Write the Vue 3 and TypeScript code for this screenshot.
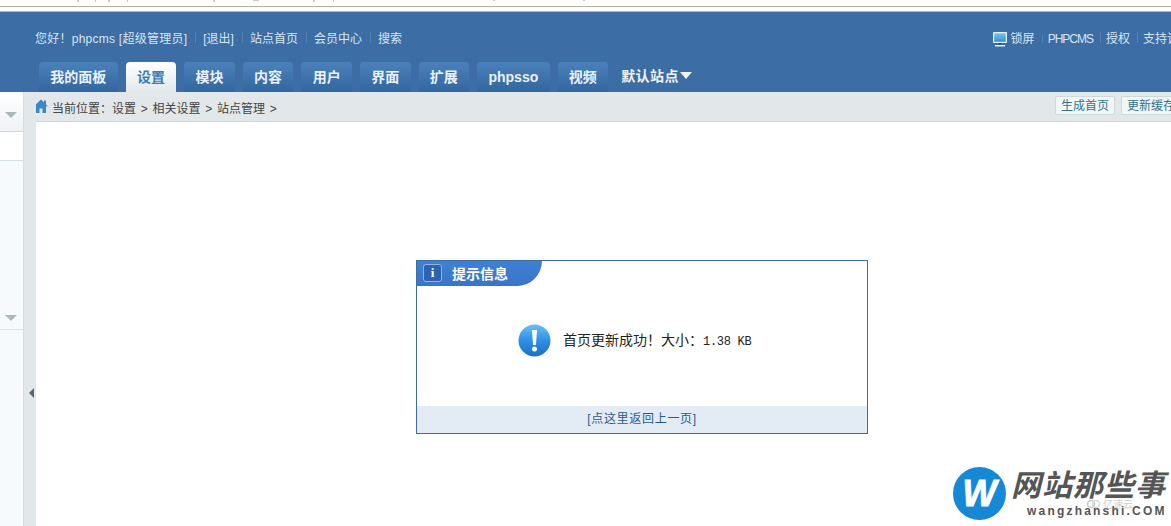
<template>
  <div class="page">
    <div class="top-strip">
      <svg class="clipped" width="1171" height="3" viewBox="0 0 1171 3">
        <path
          d="M77 0h2v2h-2ZM95 0h1v2h-1ZM108 0h2v2h-2ZM127 0h1v2h-1ZM213 0h2v2h-2ZM253 0h6v1h-6ZM313 0h2v2h-2ZM333 0h1v2h-1ZM493 0h2v1h-2ZM583 0h2v1h-2Z"
          fill="#777"
          opacity="0.4"
        />
      </svg>
    </div>

    <header class="header">
      <div class="bar">
        <div class="links">
          <span class="hello">您好！phpcms [超级管理员]</span>
          <span class="sep">[退出]</span>
          <span class="sep">站点首页</span>
          <span class="sep">会员中心</span>
          <span class="sep">搜索</span>
        </div>
        <div class="links right">
          <svg class="monitor" width="14" height="15" viewBox="0 0 14 15">
            <defs>
              <linearGradient id="screen" x1="0" y1="0" x2="0" y2="1">
                <stop offset="0" stop-color="#7cc4ef" />
                <stop offset="1" stop-color="#2f8fdc" />
              </linearGradient>
            </defs>
            <rect x="0" y="0" width="14" height="11" rx="1" fill="#e8f2fa" />
            <rect x="1.200" y="1.200" width="11.600" height="8.600" fill="url(#screen)" />
            <rect x="5.500" y="11" width="3" height="2" fill="#2b4f76" />
            <rect x="2" y="13" width="10" height="1.500" fill="#e8f2fa" />
          </svg>
          <span>锁屏</span>
          <span class="sep brand">PHPCMS</span>
          <span class="sep">授权</span>
          <span class="sep">支持论坛</span>
        </div>
      </div>
      <nav class="tabs">
        <a v-for="t in tabs" :key="t" class="tab" :class="{ on: t === '设置' }">{{ t }}</a>
        <span class="site">默认站点<i class="caret"></i></span>
      </nav>
    </header>

    <div class="body">
      <aside class="side">
        <div class="side-head"><i class="tri"></i></div>
        <div class="side-blank"></div>
        <div class="side-list"><i class="tri"></i></div>
      </aside>

      <div class="splitter"><i class="arrow"></i></div>

      <main class="main">
        <div class="crumbs">
          <svg width="14" height="14" viewBox="0 0 14 14">
            <path d="M7 .5 14 7.200H12V14H8.500V9.500H5.500V14H2V7.200H0ZM10 1.500h2v4l-2-2Z" fill="#3b86c6" />
          </svg>
          <span class="where">当前位置：设置 &gt; 相关设置 &gt; 站点管理 &gt;</span>
          <a class="btn">生成首页</a>
          <a class="btn">更新缓存</a>
        </div>

        <div class="content">
          <section class="dialog">
            <h3 class="title">
              <span class="info">i</span>
              提示信息
            </h3>
            <div class="message">
              <svg width="33" height="33" viewBox="0 0 33 33">
                <defs>
                  <linearGradient id="bang" x1="0" y1="0" x2="0" y2="1">
                    <stop offset="0" stop-color="#6cc0f2" />
                    <stop offset="0.5" stop-color="#2b90e6" />
                    <stop offset="1" stop-color="#1d6fc4" />
                  </linearGradient>
                </defs>
                <circle cx="16.500" cy="16.500" r="16" fill="url(#bang)" />
                <path d="M14 6h5l-1 15h-3Z" fill="#fff" />
                <circle cx="16.500" cy="25" r="2.500" fill="#fff" />
              </svg>
              <span class="msg-text">首页更新成功！大小：<span class="size">1.38 KB</span></span>
            </div>
            <div class="foot">[点这里返回上一页]</div>
          </section>
        </div>
      </main>
    </div>

    <div class="watermark">
      <span class="w-badge"><b>W</b></span>
      <div class="w-text">
        <div class="w-cn">网站那些事</div>
        <div class="w-en">wangzhanshi.COM</div>
      </div>
      <span class="w-faint">
        <svg width="15" height="10" viewBox="0 0 15 10">
          <circle cx="5" cy="5" r="3.500" fill="none" stroke="#999" stroke-width="1.500" />
          <circle cx="10" cy="5" r="3.500" fill="none" stroke="#bbb" stroke-width="1.500" />
        </svg>
        亿速云
      </span>
    </div>
  </div>
</template>

<script setup lang="ts">
const tabs: string[] = ['我的面板', '设置', '模块', '内容', '用户', '界面', '扩展', 'phpsso', '视频']
</script>

<style>
html,
body {
  margin: 0;
  overflow: hidden;
  background: #fff;
}
</style>

<style scoped>
.page {
  position: relative;
  width: 1171px;
  height: 526px;
  overflow: hidden;
  font-family: "Liberation Sans", "Noto Sans CJK SC", sans-serif;
  font-size: 12px;
  background: #fff;
}

.top-strip {
  height: 12px;
  box-sizing: border-box;
  background: linear-gradient(#fff 6px, #c2aea0 6px, #c2aea0 7px, #fff 7px, #fff 11px, #a9bccd 11px);
}

.clipped {
  display: block;
}

.header {
  height: 80px;
  background: #3c6da4;
  box-sizing: border-box;
  padding-left: 24px;
}

.bar {
  display: flex;
  justify-content: space-between;
  height: 50px;
  padding-left: 11px;
  white-space: nowrap;
}

.links {
  display: flex;
  align-items: center;
  height: 50px;
  color: #d9e6f2;
}

.links.right {
  margin-right: -20px;
}

.hello {
  letter-spacing: 0.250px;
}

.monitor {
  margin: 4px 4px 0 0;
}

.brand {
  letter-spacing: -1px;
  margin-top: 3px;
}

.sep {
  margin-left: 7px;
  padding-left: 6px;
  position: relative;
}

.links:not(.right) .sep {
  margin-left: 8px;
  padding-left: 8px;
}

.sep::before {
  content: "";
  position: absolute;
  left: 0;
  top: 3px;
  bottom: 3px;
  width: 1px;
  background: #5783b3;
}

.tabs {
  display: flex;
  align-items: flex-end;
  gap: 8px;
  padding-left: 15px;
  height: 30px;
}

.tab {
  height: 30px;
  line-height: 31px;
  padding: 0 11.300px;
  box-sizing: border-box;
  border-radius: 4px 4px 0 0;
  background: linear-gradient(#4b81bb, #33669e);
  color: #eaf2f9;
  font-size: 14px;
  font-weight: 700;
}

.tab.on {
  background: linear-gradient(#fff, #e2e8ea);
  color: #3c7ab5;
}

.site {
  display: flex;
  align-items: center;
  height: 34px;
  margin-left: 5px;
  color: #f1f5fa;
  font-size: 14px;
  font-weight: 700;
  letter-spacing: 0.500px;
}

.caret {
  width: 0;
  height: 0;
  margin-left: 1px;
  border-left: 6.500px solid transparent;
  border-right: 6.500px solid transparent;
  border-top: 7px solid #f1f5fa;
}

.body {
  display: flex;
  height: 434px;
}

.side {
  width: 24px;
  box-sizing: border-box;
  border-right: 1px solid #d5dee0;
  background: #f6fafc;
  display: flex;
  flex-direction: column;
}

.side-head {
  height: 40px;
  box-sizing: border-box;
  border-bottom: 1px solid #cfd8da;
  background: linear-gradient(#fff, #eef3f5);
  padding: 20px 0 0 5px;
}

.side-blank {
  height: 28px;
  background: #fff;
  border-bottom: 1px solid #d5dee0;
}

.side-list {
  height: 169px;
  box-sizing: border-box;
  border-bottom: 1px solid #dde4e6;
  padding: 154px 0 0 5px;
}

.tri {
  display: block;
  width: 0;
  height: 0;
  border-left: 6px solid transparent;
  border-right: 6px solid transparent;
  border-top: 6px solid #aab7ba;
}

.splitter {
  width: 12px;
  background: #e2e8ea;
  position: relative;
}

.arrow {
  position: absolute;
  left: 5px;
  top: 296px;
  width: 0;
  height: 0;
  border-top: 5px solid transparent;
  border-bottom: 5px solid transparent;
  border-right: 5px solid #5b666c;
}

.main {
  flex: 1;
  min-width: 0;
  display: flex;
  flex-direction: column;
}

.crumbs {
  height: 30px;
  box-sizing: border-box;
  display: flex;
  align-items: center;
  background: #e2e8ea;
  border-bottom: 1px solid #cdd8d8;
  color: #444;
  white-space: nowrap;
}

.crumbs svg {
  margin: -1px 0 0 -2px;
  flex: none;
}

.where {
  margin-left: 4px;
  margin-top: 2px;
  width: 1003px;
  flex: none;
  word-spacing: 1.400px;
}

.btn {
  flex: none;
  width: 60px;
  height: 19px;
  line-height: 18px;
  box-sizing: border-box;
  text-align: center;
  margin-right: 6px;
  margin-top: -3px;
  background: #f1f6f6;
  border: 1px solid #ced9da;
  border-radius: 2px;
  color: #2f7590;
}

.content {
  flex: 1;
  border-left: 1px solid #cdd8d8;
  margin-left: -1px;
  background: #fff;
  padding: 138px 0 0 380px;
}

.dialog {
  width: 452px;
  height: 174px;
  box-sizing: border-box;
  border: 1px solid #3a6ea5;
  display: flex;
  flex-direction: column;
}

.title {
  margin: 0;
  width: 125px;
  height: 25px;
  box-sizing: border-box;
  display: flex;
  align-items: center;
  gap: 10px;
  padding: 0 0 2px 6px;
  border-radius: 0 0 26px 0;
  background: linear-gradient(#3f80d6, #3a74c8);
  color: #fff;
  font-size: 14px;
  font-weight: 700;
}

.info {
  width: 19px;
  height: 18px;
  box-sizing: border-box;
  border: 1px solid #8db4e6;
  border-radius: 3px;
  background: #2c62b0;
  font-family: "Liberation Serif", serif;
  font-size: 13px;
  line-height: 16px;
  text-align: center;
}

.message {
  flex: 1;
  display: flex;
  align-items: center;
  padding: 0 0 11px 101px;
  gap: 12px;
}

.msg-text {
  margin-bottom: 3px;
  font-size: 14px;
  color: #222;
}

.size {
  font-family: "Liberation Mono", monospace;
  font-size: 12px;
  letter-spacing: -0.300px;
}

.foot {
  height: 27px;
  line-height: 26px;
  text-align: center;
  background: #e3ebf5;
  color: #1f5e8c;
  letter-spacing: 0.700px;
}

.watermark {
  position: absolute;
  left: 953px;
  top: 467px;
  display: flex;
  gap: 5px;
}

.w-badge {
  width: 53px;
  height: 53px;
  border-radius: 50%;
  background: #1589d6;
  display: flex;
  align-items: center;
  justify-content: center;
}

.w-badge b {
  color: #fff;
  font-size: 36px;
  font-style: italic;
  -webkit-text-stroke: 1px #fff;
}

.w-text {
  color: #555;
  font-weight: 700;
}

.w-cn {
  margin-top: 1px;
  font-size: 30px;
  line-height: 36px;
  letter-spacing: 1px;
  font-style: italic;
  white-space: nowrap;
}

.w-en {
  margin: 1px 0 0 16px;
  font-size: 12px;
  line-height: 12px;
  letter-spacing: 2.200px;
  white-space: nowrap;
}

.w-faint {
  position: absolute;
  left: 133px;
  top: 29px;
  display: flex;
  align-items: center;
  gap: 2px;
  color: #aaa;
  font-size: 10px;
  opacity: 0.55;
}
</style>
